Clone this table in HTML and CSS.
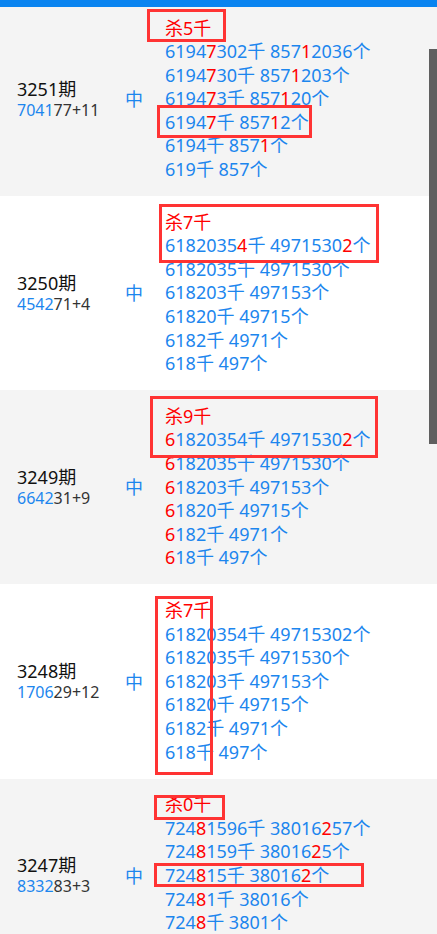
FILE: index.html
```html
<!DOCTYPE html>
<html>

<head>
    <meta charset="UTF-8">
    <title>杀码记录</title>
    <link rel="stylesheet" href="styles.css">
</head>

<body>
    <div class="topbar"></div>
    <div class="scroll-thumb"></div>
    <div class="list">
        <div class="row">
            <div class="issue">
                <div class="issue-no">3251期</div>
                <div class="issue-code"><span class="blue">7041</span>77+11</div>
            </div>
            <div class="hit">中</div>
            <div class="plans">
                <div class="kill">杀5千</div>
                <div>6194<span class="r">7</span>302千 857<span class="r">1</span>2036个</div>
                <div>6194<span class="r">7</span>30千 857<span class="r">1</span>203个</div>
                <div>6194<span class="r">7</span>3千 857<span class="r">1</span>20个</div>
                <div>6194<span class="r">7</span>千 857<span class="r">1</span>2个</div>
                <div>6194千 857<span class="r">1</span>个</div>
                <div>619千 857个</div>
            </div>
            <div class="mark" style="top: 7px; left: 147px; width: 79px; height: 33px;"></div>
            <div class="mark" style="top: 103px; left: 157px; width: 155px; height: 33px;"></div>
        </div>
        <div class="row">
            <div class="issue">
                <div class="issue-no">3250期</div>
                <div class="issue-code"><span class="blue">4542</span>71+4</div>
            </div>
            <div class="hit">中</div>
            <div class="plans">
                <div class="kill">杀7千</div>
                <div>6182035<span class="r">4</span>千 4971530<span class="r">2</span>个</div>
                <div>6182035千 4971530个</div>
                <div>618203千 497153个</div>
                <div>61820千 49715个</div>
                <div>6182千 4971个</div>
                <div>618千 497个</div>
            </div>
            <div class="mark" style="top: 8px; left: 159px; width: 220px; height: 59px;"></div>
        </div>
        <div class="row">
            <div class="issue">
                <div class="issue-no">3249期</div>
                <div class="issue-code"><span class="blue">6642</span>31+9</div>
            </div>
            <div class="hit">中</div>
            <div class="plans">
                <div class="kill">杀9千</div>
                <div><span class="r">6</span>1820354千 4971530<span class="r">2</span>个</div>
                <div><span class="r">6</span>182035千 4971530个</div>
                <div><span class="r">6</span>18203千 497153个</div>
                <div><span class="r">6</span>1820千 49715个</div>
                <div><span class="r">6</span>182千 4971个</div>
                <div><span class="r">6</span>18千 497个</div>
            </div>
            <div class="mark" style="top: 6px; left: 150px; width: 228px; height: 62px;"></div>
        </div>
        <div class="row">
            <div class="issue">
                <div class="issue-no">3248期</div>
                <div class="issue-code"><span class="blue">1706</span>29+12</div>
            </div>
            <div class="hit">中</div>
            <div class="plans">
                <div class="kill">杀7千</div>
                <div>61820354千 49715302个</div>
                <div>6182035千 4971530个</div>
                <div>618203千 497153个</div>
                <div>61820千 49715个</div>
                <div>6182千 4971个</div>
                <div>618千 497个</div>
            </div>
            <div class="mark" style="top: 12px; left: 155px; width: 58px; height: 179px;"></div>
        </div>
        <div class="row">
            <div class="issue">
                <div class="issue-no">3247期</div>
                <div class="issue-code"><span class="blue">8332</span>83+3</div>
            </div>
            <div class="hit">中</div>
            <div class="plans">
                <div class="kill">杀0千</div>
                <div>724<span class="r">8</span>1596千 38016<span class="r">2</span>57个</div>
                <div>724<span class="r">8</span>159千 38016<span class="r">2</span>5个</div>
                <div>724<span class="r">8</span>15千 38016<span class="r">2</span>个</div>
                <div>724<span class="r">8</span>1千 38016个</div>
                <div>724<span class="r">8</span>千 3801个</div>
                <div>724千 380个</div>
            </div>
            <div class="mark" style="top: 16px; left: 154px; width: 71px; height: 25px;"></div>
            <div class="mark" style="top: 84px; left: 154px; width: 210px; height: 24px;"></div>
        </div>
    </div>
</body>

</html>
```

FILE: styles.css
```css
body {
    margin: 0;
    font-family: "Noto Sans", "Noto Sans CJK SC", sans-serif;
    background: #fff;
}

.topbar {
    position: fixed;
    top: 0;
    left: 0;
    right: 0;
    height: 7px;
    background: #0a84f0;
    z-index: 3;
}

.scroll-thumb {
    position: fixed;
    top: 49px;
    right: 0;
    width: 8px;
    height: 395px;
    background: #5f5f5f;
    z-index: 3;
}

.list {
    padding-top: 2px;
}

.row {
    position: relative;
    display: flex;
    align-items: center;
    padding: 14.5px 0;
}

.row:nth-child(odd) {
    background: #f4f4f4;
}

.issue {
    width: 108px;
    padding-left: 17px;
    color: #222;
}

.issue-no {
    font-size: 18px;
    line-height: 22px;
    color: #111;
}

.issue-code {
    font-size: 16px;
    line-height: 21px;
    color: #333;
}

.blue {
    color: #1c86ee;
}

.hit {
    width: 40px;
    font-size: 18px;
    line-height: 24px;
    color: #1c86ee;
}

.plans {
    font-size: 18px;
    line-height: 23.6px;
    color: #1c86ee;
    white-space: nowrap;
}

.kill,
.r {
    color: #f00;
}

.mark {
    position: absolute;
    box-sizing: border-box;
    border: 3px solid #f33;
}
```
